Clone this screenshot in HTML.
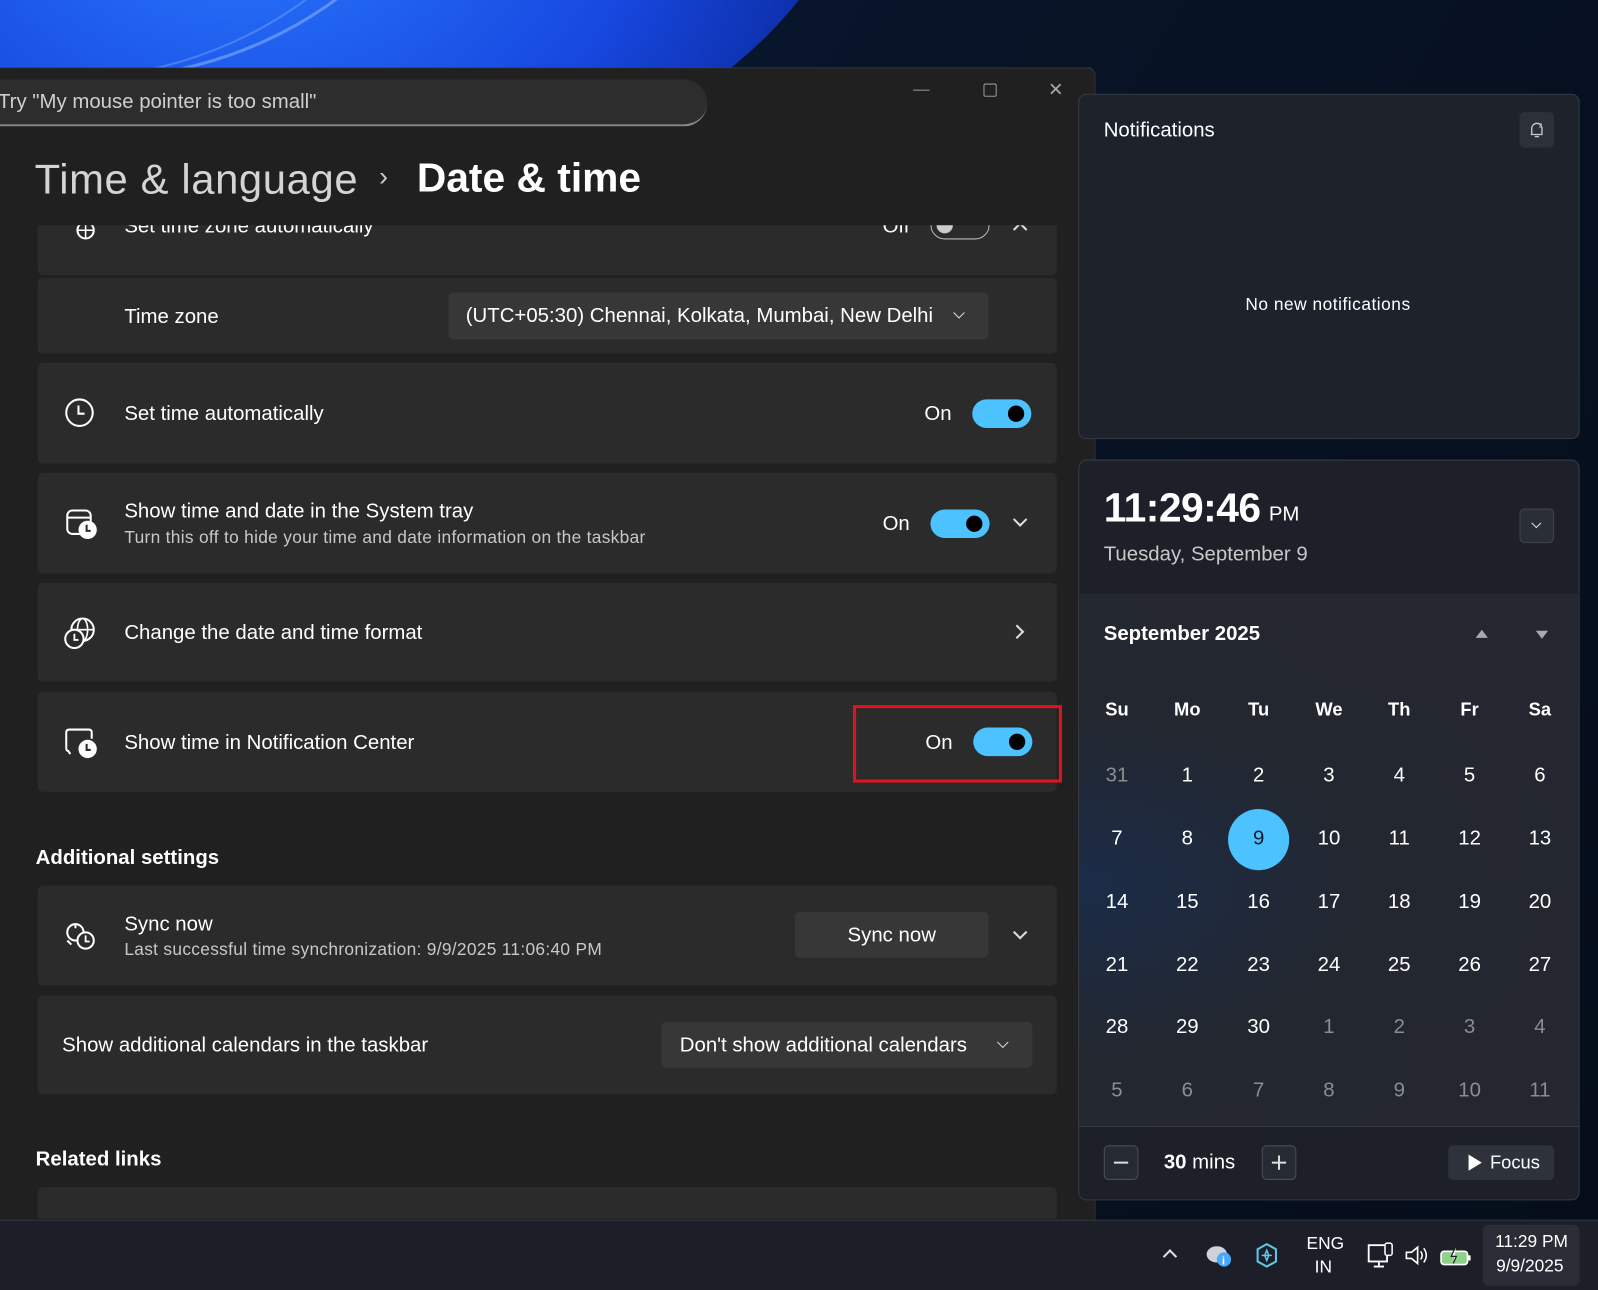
<!DOCTYPE html>
<html><head><meta charset="utf-8"><style>
*{box-sizing:border-box;margin:0;padding:0}
html,body{width:1598px;height:1290px;overflow:hidden;background:#07101f}
#w{position:absolute;left:0;top:0;width:1568px;height:1266px;transform:scale(1.01913,1.01896);transform-origin:0 0;font-family:"Liberation Sans",sans-serif;color:#fff;overflow:hidden;background:#06101e}
.a{position:absolute}
.card{position:absolute;left:37px;width:1000px;background:#2b2b2b;border-radius:5px}
.t{position:absolute;font-size:20px;color:#fff;white-space:nowrap}
.s{position:absolute;font-size:16px;color:#c8c8c8;white-space:nowrap}
.tog{position:absolute;width:58px;height:28px;border-radius:14px;background:#4cc2ff}
.tog::after{content:"";position:absolute;right:7px;top:6px;width:16px;height:16px;border-radius:50%;background:#000}
.chev{position:absolute;width:10px;height:10px;border-right:2px solid #ddd;border-bottom:2px solid #ddd}
.dd{position:absolute;background:#373737;border-radius:5px;font-size:20px;color:#fff;white-space:nowrap}
.cal span{position:absolute;width:60px;text-align:center;font-size:20px;color:#fff;transform:translateX(-30px)}
.cal span.g{color:#8a8d94}
.cal span.h{font-weight:bold;font-size:18px}
</style></head><body><div id="w">
<!-- desktop wallpaper -->
<div class="a" style="left:0;top:0;width:1568px;height:1200px;background:linear-gradient(120deg,#0b1d3e 0%,#081428 40%,#050d1a 100%)"></div>
<div class="a" style="left:-260px;top:-560px;width:1110px;height:760px;border-radius:50%;background:radial-gradient(ellipse at 45% 60%,#2a7bff 0%,#1748e0 45%,#0b2aa0 70%,#0a1c55 90%,transparent 100%)"></div>
<div class="a" style="left:-300px;top:-560px;width:760px;height:640px;border-radius:50%;border:3px solid rgba(150,190,255,.5)"></div>
<div class="a" style="left:-330px;top:-560px;width:760px;height:640px;border-radius:50%;border:2px solid rgba(150,190,255,.35)"></div>
<!-- settings window -->
<div class="a" style="left:0;top:66px;width:1075px;height:1140px;background:#202020;border-top:1px solid #3c3c3c;border-right:1px solid #333;border-radius:0 8px 0 0"></div>
<div class="a" style="left:-20px;top:78px;width:714px;height:46px;background:#2d2d2d;border-radius:0 23px 23px 0;border-bottom:2px solid #8a8a8a"></div>
<div class="t" style="left:-2px;top:89px;font-size:20px;color:#cfcfcf">Try "My mouse pointer is too small"</div>
<div class="a" style="left:896px;top:88px;width:16px;height:1px;background:#999"></div>
<div class="a" style="left:965px;top:82px;width:13px;height:13px;border:1px solid #999;border-radius:2px"></div>
<div class="t" style="left:1029px;top:74px;font-size:24px;color:#aaa">×</div>
<div class="t" style="left:34px;top:153px;font-size:41px;color:#d4d4d4;letter-spacing:0.6px">Time &amp; language</div>
<div class="t" style="left:372px;top:158px;font-size:26px;color:#ccc">›</div>
<div class="t" style="left:409px;top:153px;font-size:40px;font-weight:bold">Date &amp; time</div>
<!-- clipped content -->
<div class="a" style="left:0;top:221px;width:1075px;height:975px;overflow:hidden">
 <div style="position:absolute;left:0;top:-221px;width:1075px;height:1300px">
  <div class="card" style="top:195px;height:75px"></div>
  <svg class="a" style="left:64px;top:210px" width="30" height="28"><circle cx="20" cy="16" r="8" fill="none" stroke="#fff" stroke-width="2"/><path d="M12 16h16M20 8v16" stroke="#fff" stroke-width="1.5"/></svg>
  <div class="t" style="left:122px;top:211px">Set time zone automatically</div>
  <div class="t" style="left:866px;top:211px">Off</div>
  <div class="a" style="left:913px;top:207px;width:58px;height:28px;border:1px solid #bbb;border-radius:14px"></div>
  <div class="a" style="left:919px;top:213px;width:16px;height:16px;border-radius:50%;background:#ccc"></div>
  <div class="chev" style="left:996px;top:220px;transform:rotate(-135deg)"></div>

  <div class="card" style="top:273px;height:74px"></div>
  <div class="t" style="left:122px;top:300px">Time zone</div>
  <div class="dd" style="left:440px;top:287px;width:530px;height:46px;padding:12px 0 0 17px">(UTC+05:30) Chennai, Kolkata, Mumbai, New Delhi</div>
  <div class="chev" style="left:937px;top:303px;width:8px;height:8px;transform:rotate(45deg);border-width:1.5px"></div>

  <div class="card" style="top:356px;height:99px"></div>
  <svg class="a" style="left:62px;top:390px" width="32" height="32"><circle cx="16" cy="15" r="13" fill="none" stroke="#fff" stroke-width="2"/><path d="M15 8v8h6" fill="none" stroke="#fff" stroke-width="2"/></svg>
  <div class="t" style="left:122px;top:395px">Set time automatically</div>
  <div class="t" style="left:907px;top:395px">On</div>
  <div class="tog" style="left:954px;top:392px"></div>

  <div class="card" style="top:464px;height:99px"></div>
  <svg class="a" style="left:62px;top:498px" width="34" height="34"><rect x="4" y="3" width="23" height="23" rx="5" fill="none" stroke="#fff" stroke-width="2"/><path d="M4 10h23" stroke="#fff" stroke-width="2"/><circle cx="24" cy="22" r="9" fill="#fff"/><path d="M23 17v6h4" fill="none" stroke="#2b2b2b" stroke-width="2"/></svg>
  <div class="t" style="left:122px;top:491px">Show time and date in the System tray</div>
  <div class="s" style="left:122px;top:518px;font-size:17px;letter-spacing:0.3px">Turn this off to hide your time and date information on the taskbar</div>
  <div class="t" style="left:866px;top:503px">On</div>
  <div class="tog" style="left:913px;top:500px"></div>
  <div class="chev" style="left:996px;top:505px;transform:rotate(45deg)"></div>

  <div class="card" style="top:572px;height:97px"></div>
  <svg class="a" style="left:62px;top:604px" width="34" height="34"><circle cx="19" cy="14" r="11" fill="none" stroke="#fff" stroke-width="2"/><ellipse cx="19" cy="14" rx="5" ry="11" fill="none" stroke="#fff" stroke-width="1.6"/><path d="M8 14h22" stroke="#fff" stroke-width="1.6"/><circle cx="11" cy="23" r="9" fill="#2b2b2b" stroke="#fff" stroke-width="2"/><path d="M11 18v6h4" fill="none" stroke="#fff" stroke-width="1.8"/></svg>
  <div class="t" style="left:122px;top:610px">Change the date and time format</div>
  <div class="chev" style="left:993px;top:615px;transform:rotate(-45deg)"></div>

  <div class="card" style="top:679px;height:98px"></div>
  <svg class="a" style="left:62px;top:713px" width="34" height="34"><path d="M7 27 L5 24 Q3 24 3 21 V6 Q3 3 6 3 H25 Q28 3 28 6 V12" fill="none" stroke="#fff" stroke-width="2"/><circle cx="24" cy="22" r="9" fill="#fff"/><path d="M23 17v6h4" fill="none" stroke="#2b2b2b" stroke-width="2"/></svg>
  <div class="t" style="left:122px;top:718px">Show time in Notification Center</div>
  <div class="t" style="left:908px;top:718px">On</div>
  <div class="tog" style="left:955px;top:714px"></div>
  <div class="a" style="left:837px;top:692px;width:205px;height:76px;border:3px solid #e0141e"></div>

  <div class="t" style="left:35px;top:831px;font-weight:bold">Additional settings</div>

  <div class="card" style="top:869px;height:98px"></div>
  <svg class="a" style="left:62px;top:903px" width="34" height="34"><circle cx="12" cy="12" r="8" fill="none" stroke="#fff" stroke-width="2"/><path d="M4 20 L8 24 M12 5 v3" stroke="#fff" stroke-width="2"/><circle cx="22" cy="20" r="8" fill="#2b2b2b" stroke="#fff" stroke-width="2"/><path d="M22 15v6h4" fill="none" stroke="#fff" stroke-width="1.8"/></svg>
  <div class="t" style="left:122px;top:896px">Sync now</div>
  <div class="s" style="left:122px;top:922px;font-size:17px;letter-spacing:0.3px">Last successful time synchronization: 9/9/2025 11:06:40 PM</div>
  <div class="dd" style="left:780px;top:895px;width:190px;height:45px;text-align:center;padding-top:12px">Sync now</div>
  <div class="chev" style="left:996px;top:910px;transform:rotate(45deg)"></div>

  <div class="card" style="top:977px;height:97px"></div>
  <div class="t" style="left:61px;top:1015px">Show additional calendars in the taskbar</div>
  <div class="dd" style="left:649px;top:1003px;width:364px;height:45px;padding:12px 0 0 18px">Don't show additional calendars</div>
  <div class="chev" style="left:980px;top:1019px;width:8px;height:8px;transform:rotate(45deg);border-width:1.5px"></div>

  <div class="t" style="left:35px;top:1127px;font-weight:bold">Related links</div>
  <div class="card" style="top:1165px;height:80px"></div>
 </div>
</div>
<!-- notifications panel -->
<div class="a" style="left:1058px;top:92px;width:492px;height:339px;background:#1e222b;border:1px solid #363a44;border-radius:8px"></div>
<div class="t" style="left:1083px;top:117px">Notifications</div>
<div class="a" style="left:1491px;top:110px;width:34px;height:35px;background:#2c3039;border-radius:5px"></div>
<svg class="a" style="left:1499px;top:118px" width="18" height="18"><path d="M4 14V8a5 5 0 0 1 10 0v6H3M7 16h4" fill="none" stroke="#ccc" stroke-width="1.3"/><text x="11" y="7" font-size="7" fill="#ccc" font-family="Liberation Sans">z</text></svg>
<div class="s" style="left:1222px;top:289px;color:#fff;font-size:17px;letter-spacing:0.5px">No new notifications</div>
<!-- clock/calendar panel -->
<div class="a" style="left:1058px;top:451px;width:492px;height:727px;background:#1d2028;border:1px solid #363a44;border-radius:8px;overflow:hidden">
 <div class="a" style="left:0;top:131px;width:492px;height:522px;background:radial-gradient(ellipse at 0% 55%,#1b2c48 0%,#232730 40%,#24272f 100%)"></div>
 <div class="a" style="left:0;top:653px;width:492px;height:1px;background:#383c45"></div>
</div>
<div class="t" style="left:1083px;top:477px;font-size:40px;font-weight:bold;letter-spacing:-0.5px">11:29:46</div>
<div class="t" style="left:1245px;top:494px;font-size:20px">PM</div>
<div class="t" style="left:1083px;top:533px;color:#c8c8c8">Tuesday, September 9</div>
<div class="a" style="left:1491px;top:499px;width:34px;height:34px;background:#2a2e37;border:1px solid #41454e;border-radius:5px"></div>
<div class="chev" style="left:1504px;top:510px;width:7px;height:7px;transform:rotate(45deg);border-width:1.5px"></div>
<div class="t" style="left:1083px;top:611px;font-weight:bold">September 2025</div>
<div class="a" style="left:1448px;top:618px;border:6px solid transparent;border-bottom:8px solid #aaa;border-top:0"></div>
<div class="a" style="left:1507px;top:619px;border:6px solid transparent;border-top:8px solid #aaa;border-bottom:0"></div>
<div class="a" style="left:1205px;top:794px;width:60px;height:60px;border-radius:50%;background:#4cc2ff"></div>
<div class="cal">
<span class="h" style="left:1096px;top:686px">Su</span><span class="h" style="left:1165px;top:686px">Mo</span><span class="h" style="left:1235px;top:686px">Tu</span><span class="h" style="left:1304px;top:686px">We</span><span class="h" style="left:1373px;top:686px">Th</span><span class="h" style="left:1442px;top:686px">Fr</span><span class="h" style="left:1511px;top:686px">Sa</span>
<span class="g" style="left:1096px;top:750px">31</span><span style="left:1165px;top:750px">1</span><span style="left:1235px;top:750px">2</span><span style="left:1304px;top:750px">3</span><span style="left:1373px;top:750px">4</span><span style="left:1442px;top:750px">5</span><span style="left:1511px;top:750px">6</span>
<span style="left:1096px;top:812px">7</span><span style="left:1165px;top:812px">8</span><span style="left:1235px;top:812px;color:#0b1a26">9</span><span style="left:1304px;top:812px">10</span><span style="left:1373px;top:812px">11</span><span style="left:1442px;top:812px">12</span><span style="left:1511px;top:812px">13</span>
<span style="left:1096px;top:874px">14</span><span style="left:1165px;top:874px">15</span><span style="left:1235px;top:874px">16</span><span style="left:1304px;top:874px">17</span><span style="left:1373px;top:874px">18</span><span style="left:1442px;top:874px">19</span><span style="left:1511px;top:874px">20</span>
<span style="left:1096px;top:936px">21</span><span style="left:1165px;top:936px">22</span><span style="left:1235px;top:936px">23</span><span style="left:1304px;top:936px">24</span><span style="left:1373px;top:936px">25</span><span style="left:1442px;top:936px">26</span><span style="left:1511px;top:936px">27</span>
<span style="left:1096px;top:997px">28</span><span style="left:1165px;top:997px">29</span><span style="left:1235px;top:997px">30</span><span class="g" style="left:1304px;top:997px">1</span><span class="g" style="left:1373px;top:997px">2</span><span class="g" style="left:1442px;top:997px">3</span><span class="g" style="left:1511px;top:997px">4</span>
<span class="g" style="left:1096px;top:1059px">5</span><span class="g" style="left:1165px;top:1059px">6</span><span class="g" style="left:1235px;top:1059px">7</span><span class="g" style="left:1304px;top:1059px">8</span><span class="g" style="left:1373px;top:1059px">9</span><span class="g" style="left:1442px;top:1059px">10</span><span class="g" style="left:1511px;top:1059px">11</span>
</div>
<div class="a" style="left:1083px;top:1124px;width:34px;height:34px;border:1px solid #4a4e57;border-radius:5px;background:#262a32"></div>
<div class="a" style="left:1093px;top:1140px;width:14px;height:1.5px;background:#ddd"></div>
<div class="t" style="left:1142px;top:1130px"><b>30</b> mins</div>
<div class="a" style="left:1238px;top:1124px;width:34px;height:34px;border:1px solid #4a4e57;border-radius:5px;background:#262a32"></div>
<div class="a" style="left:1248px;top:1140px;width:14px;height:1.5px;background:#ddd"></div>
<div class="a" style="left:1254px;top:1134px;width:1.5px;height:14px;background:#ddd"></div>
<div class="a" style="left:1421px;top:1124px;width:104px;height:34px;border-radius:5px;background:#2e323a"></div>
<div class="a" style="left:1441px;top:1133px;border:8px solid transparent;border-left:13px solid #fff;border-right:0"></div>
<div class="t" style="left:1462px;top:1131px;font-size:18px">Focus</div>
<!-- taskbar -->
<div class="a" style="left:0;top:1197px;width:1568px;height:69px;background:#1c1f27;border-top:1px solid #33363e"></div>
<div class="chev" style="left:1143px;top:1228px;transform:rotate(-135deg);width:10px;height:10px"></div>
<svg class="a" style="left:1182px;top:1218px" width="30" height="28"><ellipse cx="12" cy="13" rx="10" ry="8" fill="#cfd2d8"/><circle cx="19" cy="18" r="7" fill="#4aa8ff"/><text x="17" y="23" font-size="11" fill="#fff" font-family="Liberation Sans" font-weight="bold">i</text></svg>
<svg class="a" style="left:1229px;top:1218px" width="28" height="28"><path d="M5 8 L14 3 L23 8 V20 L14 25 L5 20 Z" fill="none" stroke="#5ec8e8" stroke-width="2"/><path d="M14 9 L16 14 L14 19 L12 14Z M9 14h10" fill="none" stroke="#5ec8e8" stroke-width="1.5"/></svg>
<div class="t" style="left:1282px;top:1211px;font-size:17px">ENG</div>
<div class="t" style="left:1290px;top:1234px;font-size:17px">IN</div>
<svg class="a" style="left:1340px;top:1218px" width="30" height="28"><rect x="3" y="4" width="18" height="16" fill="none" stroke="#fff" stroke-width="1.8"/><path d="M8 25h10M13 20v5" stroke="#fff" stroke-width="1.8"/><rect x="19" y="2" width="7" height="12" rx="2" fill="#1c1f27" stroke="#fff" stroke-width="1.5"/></svg>
<svg class="a" style="left:1377px;top:1220px" width="26" height="24"><path d="M3 9h5l6-5v16l-6-5H3Z" fill="none" stroke="#fff" stroke-width="1.6"/><path d="M17 8q3 4 0 8M20 5q5 7 0 14" fill="none" stroke="#fff" stroke-width="1.5"/></svg>
<svg class="a" style="left:1412px;top:1220px" width="34" height="24"><rect x="2" y="8" width="26" height="13" rx="3" fill="#8fd18a" stroke="#fff" stroke-width="1.6"/><rect x="28" y="12" width="3" height="5" fill="#fff"/><path d="M17 2 L12 13 H17 L14 20" fill="#fff" stroke="#1c1f27" stroke-width="1.2"/></svg>
<div class="a" style="left:1455px;top:1202px;width:95px;height:60px;background:#2a2d35;border-radius:6px"></div>
<div class="t" style="left:1467px;top:1209px;font-size:17px">11:29 PM</div>
<div class="t" style="left:1468px;top:1233px;font-size:17px">9/9/2025</div>
</div></body></html>
